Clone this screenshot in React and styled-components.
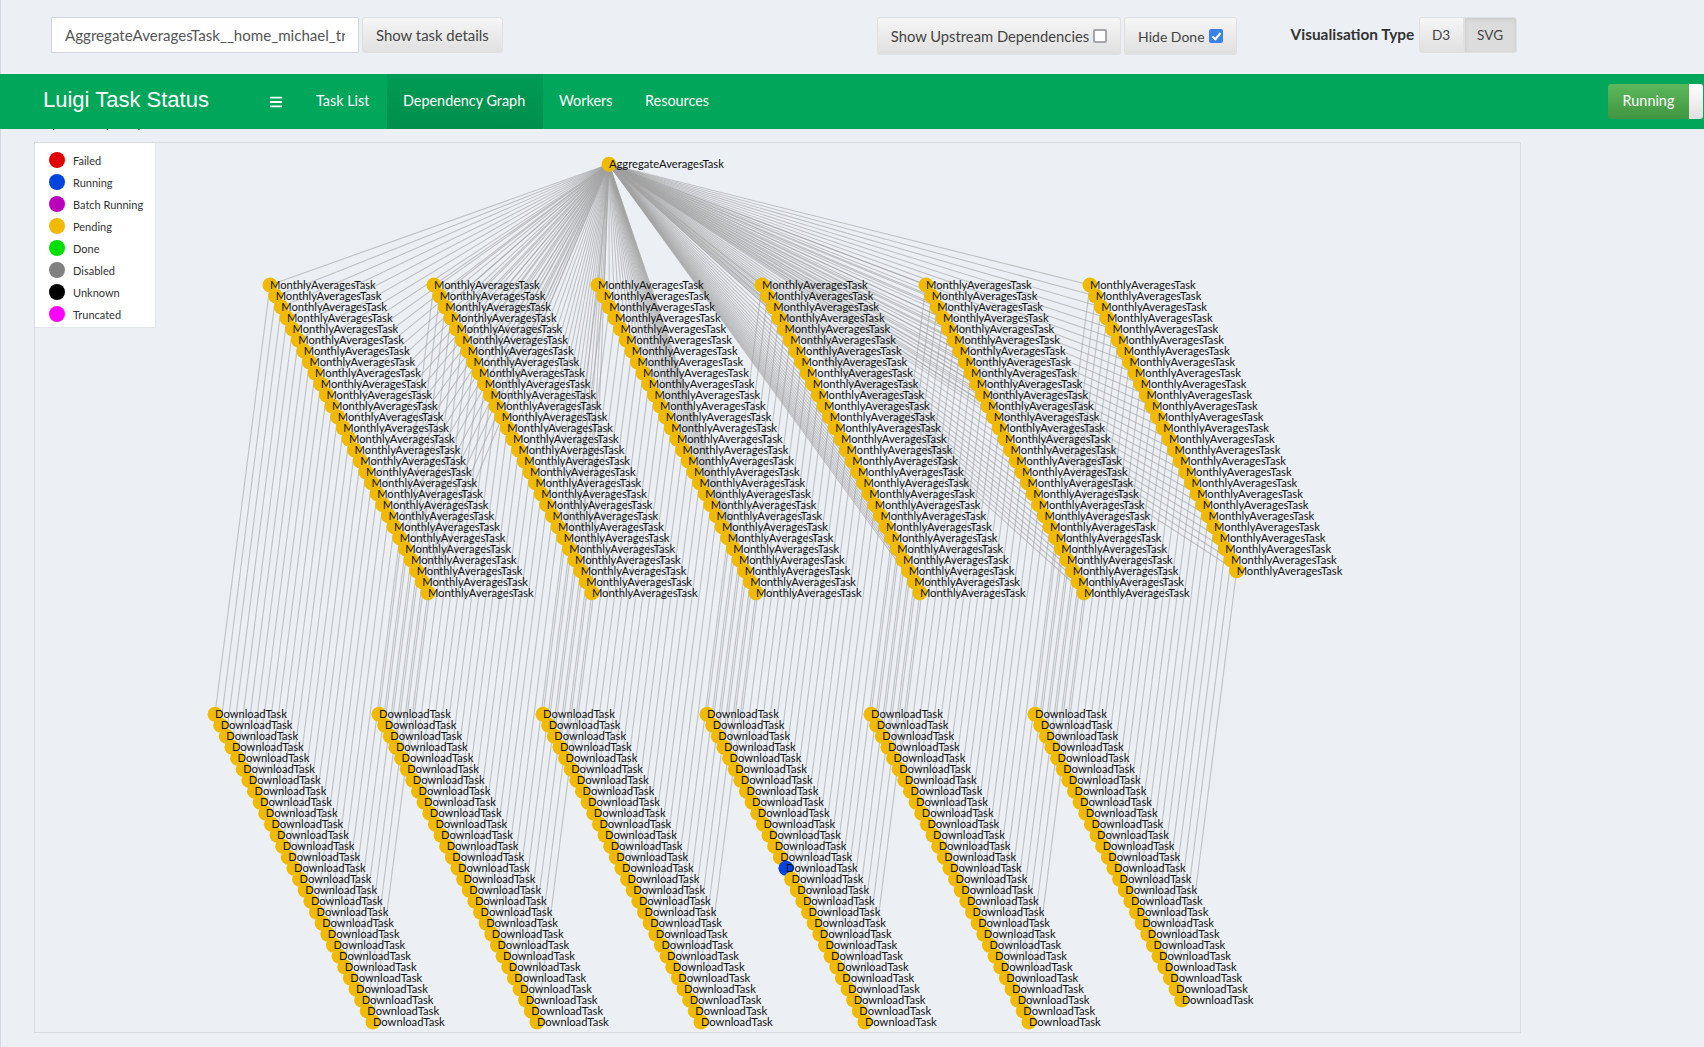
import React from "react";
import styled, { createGlobalStyle } from "styled-components";
import { FaBars } from "react-icons/fa";

const GlobalStyle = createGlobalStyle`
  html, body {
    margin: 0;
    padding: 0;
    background: #ecf0f5;
    font-family: Lato, "Noto Sans", sans-serif;
    color: #333;
    overflow: hidden;
  }
`;

const Page = styled.div`
  height: 1047px;
  border-left: 1px solid #d2d6de;
  box-sizing: border-box;
`;

const Controls = styled.div`
  height: 74px;
  box-sizing: border-box;
  padding: 17px 0 0 50px;
  display: flex;
  align-items: flex-start;
`;

const TaskInput = styled.input`
  width: 308px;
  height: 36px;
  box-sizing: border-box;
  padding: 0 13px;
  border: 1px solid #d2d6de;
  background: #fff;
  font: 15.1px Lato, sans-serif;
  color: #555;
  outline: none;
`;

const Btn = styled.button`
  height: ${(p) => p.$h || 36}px;
  box-sizing: border-box;
  padding: 0 13px;
  margin-left: ${(p) => p.$ml || 0}px;
  border: 1px solid #e0e0e0;
  border-radius: 3px;
  background: linear-gradient(#f6f6f6, #e0e0e0);
  font: ${(p) => p.$fs || 14.6}px Lato, sans-serif;
  color: #444;
  display: flex;
  align-items: center;
  gap: 4px;
  white-space: nowrap;
`;

const Check = styled.input`
  appearance: none;
  position: relative;
  margin: 0;
  width: 14px;
  height: 14px;
  box-sizing: border-box;
  border: 2px solid #a5a5b2;
  border-radius: 2px;
  background: #fff;

  &:checked {
    border-color: #3b82e6;
    background: #3b82e6;
  }

  &:checked::after {
    content: "";
    position: absolute;
    left: 3px;
    top: 0;
    width: 3px;
    height: 7px;
    border: solid #fff;
    border-width: 0 2px 2px 0;
    transform: rotate(40deg);
  }
`;

const VisLabel = styled.span`
  margin-left: 54px;
  width: 128px;
  line-height: 34px;
  font-size: 15.4px;
  font-weight: 700;
  color: #333;
  white-space: nowrap;
`;

const ToggleBtn = styled.button`
  width: ${(p) => p.$w}px;
  height: 36px;
  padding: 0;
  border: 1px solid #e0e0e0;
  border-radius: ${(p) => (p.$active ? "0 3px 3px 0" : "3px 0 0 3px")};
  background: ${(p) => (p.$active ? "#dcdcdc" : "linear-gradient(#f6f6f6, #e0e0e0)")};
  box-shadow: ${(p) => (p.$active ? "inset 0 2px 4px rgba(0,0,0,.08)" : "none")};
  font: 13.6px Lato, sans-serif;
  color: #444;
`;

const Nav = styled.nav`
  position: relative;
  z-index: 2;
  margin-left: -1px;
  height: 55px;
  background: #00a65a;
  display: flex;
  align-items: stretch;
  color: #fff;
`;

const Brand = styled.div`
  width: 269px;
  padding-left: 43px;
  box-sizing: border-box;
  font: 22px/51px "Liberation Sans", Arial, sans-serif;
`;

const Burger = styled.div`
  width: 31px;
  display: flex;
  align-items: center;
  font-size: 14px;
`;

const NavItem = styled.a`
  padding: 0 16px 2px;
  display: flex;
  align-items: center;
  font-size: 14.4px;
  background: ${(p) => (p.$active ? "linear-gradient(#009b54, #008f4d)" : "transparent")};
  width: ${(p) => p.$w}px;
  box-sizing: border-box;
  white-space: nowrap;
`;

const Switch = styled.div`
  margin: 10px 1px 0 auto;
  height: 35px;
  display: flex;
`;

const SwitchLabel = styled.div`
  width: 81px;
  box-sizing: border-box;
  padding-bottom: 2px;
  display: flex;
  align-items: center;
  justify-content: center;
  font-size: 14.4px;
  border-radius: 3px 0 0 3px;
  background: linear-gradient(#5cb85c, #419641);
`;

const SwitchHandle = styled.div`
  width: 14px;
  border-radius: 0 3px 3px 0;
  background: linear-gradient(#fff, #e0e0e0);
`;

const Heading = styled.div`
  margin: -14px 0 0 33px;
  height: 16px;
  font-size: 14px;
  line-height: 16px;
  color: #333;
`;

const GraphPanel = styled.section`
  position: relative;
  margin: 11px 0 0 33px;
  width: 1487px;
  height: 891px;
  box-sizing: border-box;
  border: 1px solid #d8dce2;
`;

const GraphSvg = styled.svg`
  display: block;
`;

const Edge = styled.line`
  stroke: #a2a2a2;
  stroke-width: 1.1;
  stroke-opacity: 0.6;
`;

const NodeDot = styled.circle`
  fill: ${(p) => p.$color};
`;

const NodeLabel = styled.text`
  font: 11.2px Lato, sans-serif;
  fill: #111;
`;

const Legend = styled.ul`
  position: absolute;
  left: 0;
  top: 0;
  width: 121px;
  height: 185px;
  box-sizing: border-box;
  margin: 0;
  padding: 6px 0 0 14px;
  list-style: none;
  background: #fff;
  border-right: 1px solid #e2e5ea;
  border-bottom: 1px solid #e2e5ea;
`;

const LegendRow = styled.li`
  height: 22px;
  display: flex;
  align-items: center;
  gap: 8px;
  font-size: 11px;
  color: #333;
  white-space: nowrap;
`;

const LegendDot = styled.span`
  width: 16px;
  height: 16px;
  flex: none;
  border-radius: 50%;
  background: ${(p) => p.$color};
`;

const PENDING = "#f0ba00";
const RUNNING = "#0044dd";
const ROOT = { x: 609, y: 164.3 };
const DX = 5.64;
const DY = 10.99;
const COL_GAP = 164;
const R = 7.5;

const legendItems = [
  ["Failed", "#e00000"],
  ["Running", RUNNING],
  ["Batch Running", "#bb00bb"],
  ["Pending", PENDING],
  ["Done", "#00dd00"],
  ["Disabled", "#808080"],
  ["Unknown", "#000000"],
  ["Truncated", "#ff00ff"],
];

const buildGraph = () => {
  const monthly = [];
  const download = [];
  for (let c = 0; c < 6; c++) {
    const rows = c < 5 ? 29 : 27;
    for (let r = 0; r < rows; r++) {
      monthly.push({ x: 270 + COL_GAP * c + DX * r, y: 285 + DY * r });
      download.push({
        x: 215 + COL_GAP * c + DX * r,
        y: 714.3 + DY * r,
        running: c === 3 && r === 14,
      });
    }
  }
  return { monthly, download };
};

const { monthly, download } = buildGraph();

const Graph = () => (
  <GraphSvg width="1485" height="889" viewBox="35 143 1485 889">
    {monthly.map((m, i) => (
      <Edge key={"a" + i} x1={ROOT.x} y1={ROOT.y} x2={m.x} y2={m.y} />
    ))}
    {monthly.map((m, i) => (
      <Edge key={"b" + i} x1={m.x} y1={m.y} x2={download[i].x} y2={download[i].y} />
    ))}
    <NodeDot cx={ROOT.x} cy={ROOT.y} r={R} $color={PENDING} />
    {monthly.map((m, i) => (
      <NodeDot key={"m" + i} cx={m.x} cy={m.y} r={R} $color={PENDING} />
    ))}
    {download.map((d, i) => (
      <NodeDot key={"d" + i} cx={d.x} cy={d.y} r={R} $color={d.running ? RUNNING : PENDING} />
    ))}
    <NodeLabel x={ROOT.x} y={ROOT.y + 4}>AggregateAveragesTask</NodeLabel>
    {monthly.map((m, i) => (
      <NodeLabel key={"mt" + i} x={m.x} y={m.y + 4}>MonthlyAveragesTask</NodeLabel>
    ))}
    {download.map((d, i) => (
      <NodeLabel key={"dt" + i} x={d.x} y={d.y + 4}>DownloadTask</NodeLabel>
    ))}
  </GraphSvg>
);

const App = () => (
  <Page>
    <GlobalStyle />
    <Controls>
      <TaskInput readOnly value="AggregateAveragesTask__home_michael_training_data" />
      <Btn $ml={3} $fs={14.9}>Show task details</Btn>
      <Btn $ml={374} $h={38} $fs={14.75}>
        Show Upstream Dependencies <Check type="checkbox" readOnly />
      </Btn>
      <Btn $ml={3} $h={38} $fs={14}>
        Hide Done <Check type="checkbox" readOnly checked />
      </Btn>
      <VisLabel>Visualisation Type</VisLabel>
      <ToggleBtn $w={45}>D3</ToggleBtn>
      <ToggleBtn $w={53} $active>SVG</ToggleBtn>
    </Controls>
    <Nav>
      <Brand>Luigi Task Status</Brand>
      <Burger><FaBars /></Burger>
      <NavItem $w={87}>Task List</NavItem>
      <NavItem $w={156} $active>Dependency Graph</NavItem>
      <NavItem $w={86}>Workers</NavItem>
      <NavItem>Resources</NavItem>
      <Switch>
        <SwitchLabel>Running</SwitchLabel>
        <SwitchHandle />
      </Switch>
    </Nav>
    <Heading>Dependency Graph</Heading>
    <GraphPanel>
      <Graph />
      <Legend>
        {legendItems.map(([label, color]) => (
          <LegendRow key={label}>
            <LegendDot $color={color} />
            {label}
          </LegendRow>
        ))}
      </Legend>
    </GraphPanel>
  </Page>
);

export default App;
